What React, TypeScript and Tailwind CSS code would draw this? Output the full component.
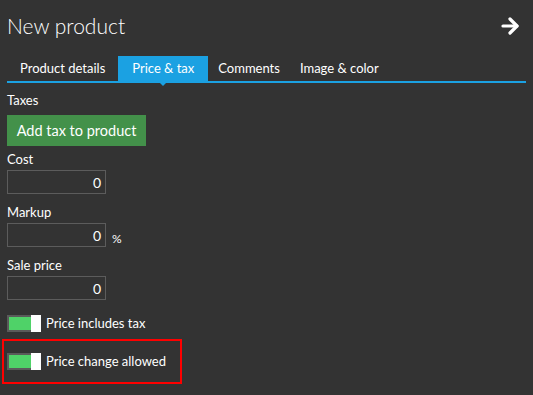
import { ArrowRight } from "lucide-react";

function Field({ label, suffix }: { label: string; suffix?: string }) {
  return (
    <div className="flex flex-col">
      <div className="h-[22px] text-[13px] leading-[22px] text-white">{label}</div>
      <div className="flex items-end gap-[6px]">
        <div className="flex h-[24px] w-[99px] items-center justify-end border border-[#5c5c5c] pr-[4px] text-[14px] text-white">
          0
        </div>
        {suffix && <span className="text-[12px] leading-[16px] text-white">{suffix}</span>}
      </div>
    </div>
  );
}

function Toggle({ label }: { label: string }) {
  return (
    <div className="flex items-center gap-[5px]">
      <div className="flex h-[17px] w-[34px] border-2 border-r-0 border-[#5a5a5a] bg-[#5a5a5a]">
        <div className="flex-1 bg-[#4fd268]" />
        <div className="-my-[2px] w-[10px] bg-white" />
      </div>
      <span className="whitespace-nowrap text-[13px] leading-[17px] text-white">{label}</span>
    </div>
  );
}

export default function App() {
  const tabs = ["Product details", "Price & tax", "Comments", "Image & color"];
  return (
    <div
      className="h-[395px] w-[533px] overflow-hidden bg-[#333333] text-white"
      style={{ fontFamily: 'Lato, "Open Sans", sans-serif' }}
    >
      {/* Header */}
      <div className="flex h-[56px] items-start justify-between pl-[7px] pr-[11px] pt-[11px]">
        <h1 className="text-[21px] font-light leading-[30px]">New product</h1>
        <ArrowRight className="mt-[3px] h-[24px] w-[24px]" strokeWidth={3.2} />
      </div>

      {/* Tabs */}
      <div className="relative mx-[7px] flex h-[27px] border-b-2 border-[#1ba1e2]">
        {tabs.map((t, i) => (
          <div
            key={t}
            className={
              i === 1
                ? "relative flex h-[25px] items-center whitespace-nowrap bg-[#1ba1e2] px-[14px] text-[13px]"
                : i === 0
                  ? "flex h-[25px] items-center whitespace-nowrap px-[13px] text-[13px]"
                  : "flex h-[25px] items-center whitespace-nowrap px-[10px] text-[13px]"
            }
          >
            {t}
            {i === 1 && (
              <span className="absolute left-1/2 top-[25px] h-0 w-0 -translate-x-1/2 border-x-[5px] border-t-[5px] border-x-transparent border-t-[#1ba1e2]" />
            )}
          </div>
        ))}
      </div>

      {/* Body */}
      <div className="flex flex-col px-[7px] pt-[6px]">
        <div className="h-[26px] text-[13px] leading-[22px]">Taxes</div>
        <button className="h-[31px] w-[139px] whitespace-nowrap bg-[#43914a] text-[14.5px] text-white">
          Add tax to product
        </button>
        <div className="mt-[2px] flex flex-col gap-[7px]">
          <Field label="Cost" />
          <Field label="Markup" suffix="%" />
          <Field label="Sale price" />
        </div>
        <div className="mt-[15px]">
          <Toggle label="Price includes tax" />
        </div>
        <div className="-mx-[5px] mt-[7px] h-[45px] w-[180px] border-2 border-[#ff0000] pl-[3px] pt-[12px]">
          <Toggle label="Price change allowed" />
        </div>
      </div>
    </div>
  );
}
